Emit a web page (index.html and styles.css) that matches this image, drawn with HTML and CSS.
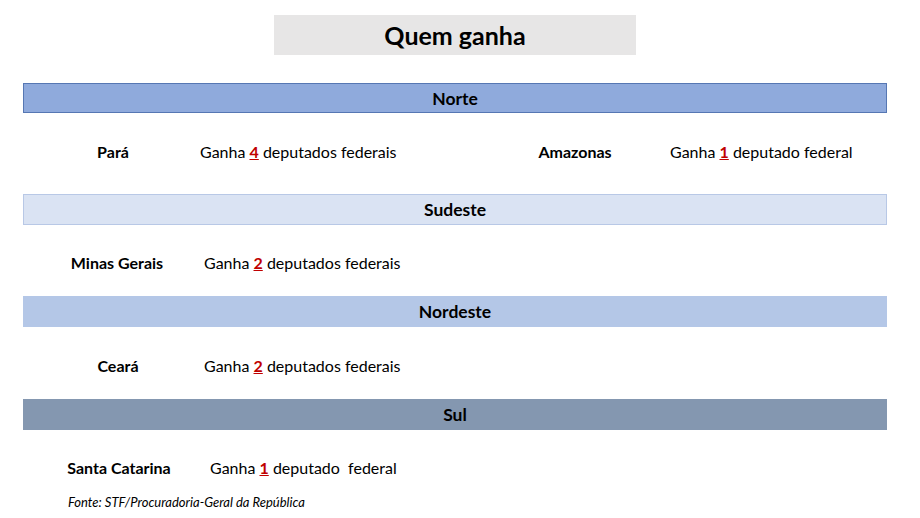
FILE: index.html
```html
<!DOCTYPE html>
<html lang="pt">
<head>
<meta charset="utf-8">
<title>Quem ganha</title>
<link rel="stylesheet" href="styles.css">
</head>
<body>
<div class="page">
  <div class="title-wrap">
    <h1 class="title">Quem ganha</h1>
  </div>

  <div class="bar bar-norte">Norte</div>
  <div class="row row-norte">
    <div class="item item-para">
      <span class="label">Pará</span>
      <span class="value">Ganha <b class="num">4</b> deputados federais</span>
    </div>
    <div class="item item-amazonas">
      <span class="label">Amazonas</span>
      <span class="value">Ganha <b class="num">1</b> deputado federal</span>
    </div>
  </div>

  <div class="bar bar-sudeste">Sudeste</div>
  <div class="row row-sudeste">
    <div class="item item-minas">
      <span class="label">Minas Gerais</span>
      <span class="value">Ganha <b class="num">2</b> deputados federais</span>
    </div>
  </div>

  <div class="bar bar-nordeste">Nordeste</div>
  <div class="row row-nordeste">
    <div class="item item-ceara">
      <span class="label">Ceará</span>
      <span class="value">Ganha <b class="num">2</b> deputados federais</span>
    </div>
  </div>

  <div class="bar bar-sul">Sul</div>
  <div class="row row-sul">
    <div class="item item-sc">
      <span class="label">Santa Catarina</span>
      <span class="value">Ganha <b class="num">1</b> deputado&nbsp; federal</span>
    </div>
  </div>

  <p class="source">Fonte: STF/Procuradoria-Geral da República</p>
</div>
</body>
</html>
```

FILE: styles.css
```css
* { box-sizing: border-box; }
html, body { margin: 0; padding: 0; background: #ffffff; }
body {
  font-family: Lato, "Liberation Sans", sans-serif;
  color: #000;
  width: 920px;
  height: 518px;
  overflow: hidden;
}
.page { padding: 15px 33px 0 23px; }

.title-wrap { display: flex; justify-content: center; }
.title {
  margin: 0;
  width: 362px;
  height: 40px;
  background: #e7e6e6;
  font-size: 25px;
  font-weight: 700;
  display: flex;
  align-items: center;
  justify-content: center;
}

.bar {
  margin-top: 28px;
  height: 30px;
  display: flex;
  align-items: center;
  justify-content: center;
  font-size: 17.5px;
  font-weight: 700;
}
.bar-norte { background: #8faadc; border: 1.5px solid #5677b3; height: 30px; }
.bar-sudeste { background: #dae3f3; border: 1px solid #b8c8e6; margin-top: 0; height: 31px; }
.bar-nordeste { background: #b4c7e7; margin-top: 0; height: 31px; }
.bar-sul { background: #8497b0; margin-top: 0; height: 31px; }

.row {
  display: flex;
  align-items: flex-start;
  font-size: 16px;
  line-height: 20px;
}
.row-norte { height: 81px; padding-top: 29px; }
.row-sudeste { height: 71px; padding-top: 28px; }
.row-nordeste { height: 72px; padding-top: 29px; }
.row-sul { height: 64px; padding-top: 28px; }

.item { display: flex; align-items: center; }
.label { width: 160px; text-align: center; font-weight: 700; }
.value { white-space: nowrap; }
.num { color: #c00000; text-decoration: underline; font-weight: 700; }

.item-para { padding-left: 10px; width: 472px; }
.item-para .value { margin-left: 7px; }
.item-amazonas .value { margin-left: 15px; }
.item-minas { padding-left: 14px; }
.item-minas .value { margin-left: 7px; }
.item-ceara { padding-left: 15px; }
.item-ceara .value { margin-left: 6px; }
.item-sc { padding-left: 16px; }
.item-sc .value { margin-left: 11px; }

.source {
  margin: 0 0 0 45px;
  font-size: 13px;
  font-style: italic;
  line-height: 16px;
}
```
